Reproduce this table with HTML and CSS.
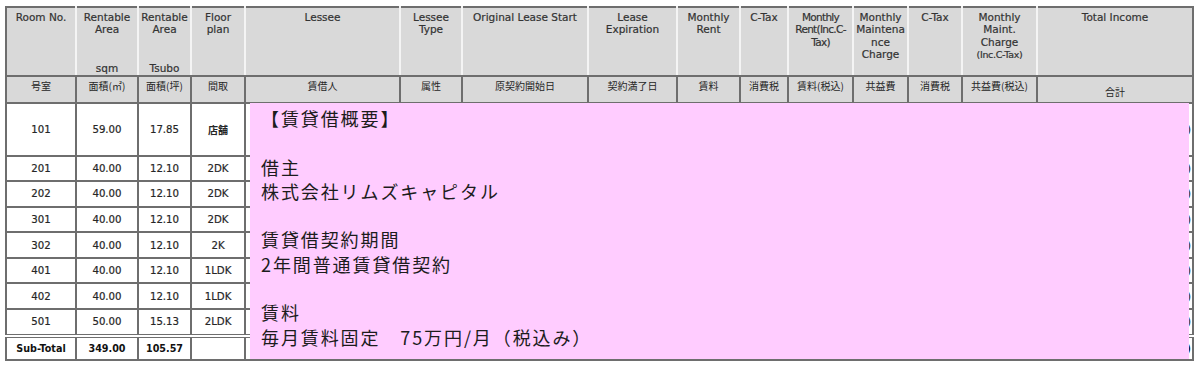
FILE: index.html
```html
<!DOCTYPE html>
<html lang="ja">
<head>
<meta charset="utf-8">
<title>Rent Roll</title>
<link rel="stylesheet" href="styles.css">
</head>
<body>
<div class="sheet">
  <table class="grid">
    <colgroup>
      <col style="width:70px"><col style="width:62px"><col style="width:53px"><col style="width:54px">
      <col style="width:155px"><col style="width:62px"><col style="width:126px"><col style="width:89px">
      <col style="width:63px"><col style="width:48px"><col style="width:65px"><col style="width:55px">
      <col style="width:54px"><col style="width:75px"><col style="width:156px">
    </colgroup>
    <thead>
      <tr class="h1">
        <th>Room No.</th>
        <th><div class="split"><span>Rentable<br>Area</span><span>sqm</span></div></th>
        <th><div class="split"><span>Rentable<br>Area</span><span>Tsubo</span></div></th>
        <th>Floor<br>plan</th>
        <th>Lessee</th>
        <th>Lessee<br>Type</th>
        <th>Original Lease Start</th>
        <th>Lease<br>Expiration</th>
        <th>Monthly<br>Rent</th>
        <th>C-Tax</th>
        <th class="tight">Monthly<br>Rent(Inc.C-<br>Tax)</th>
        <th>Monthly<br>Maintena<br>nce<br>Charge</th>
        <th>C-Tax</th>
        <th>Monthly<br>Maint.<br>Charge<br><span class="small">(Inc.C-Tax)</span></th>
        <th>Total Income</th>
      </tr>
      <tr class="h2">
        <th>号室</th>
        <th>面積(㎡)</th>
        <th>面積(坪)</th>
        <th>間取</th>
        <th>賃借人</th>
        <th>属性</th>
        <th>原契約開始日</th>
        <th>契約満了日</th>
        <th>賃料</th>
        <th>消費税</th>
        <th>賃料(税込)</th>
        <th>共益費</th>
        <th>消費税</th>
        <th>共益費(税込)</th>
        <th class="mid">合計</th>
      </tr>
    </thead>
    <tbody>
      <tr class="tall"><td>101</td><td>59.00</td><td>17.85</td><td class="jp">店舗</td><td></td><td></td><td></td><td></td><td></td><td></td><td></td><td></td><td></td><td></td><td class="amt">(0)</td></tr>
      <tr><td>201</td><td>40.00</td><td>12.10</td><td>2DK</td><td></td><td></td><td></td><td></td><td></td><td></td><td></td><td></td><td></td><td></td><td class="amt">(0)</td></tr>
      <tr><td>202</td><td>40.00</td><td>12.10</td><td>2DK</td><td></td><td></td><td></td><td></td><td></td><td></td><td></td><td></td><td></td><td></td><td class="amt">(0)</td></tr>
      <tr><td>301</td><td>40.00</td><td>12.10</td><td>2DK</td><td></td><td></td><td></td><td></td><td></td><td></td><td></td><td></td><td></td><td></td><td class="amt">(0)</td></tr>
      <tr><td>302</td><td>40.00</td><td>12.10</td><td>2K</td><td></td><td></td><td></td><td></td><td></td><td></td><td></td><td></td><td></td><td></td><td class="amt">(0)</td></tr>
      <tr><td>401</td><td>40.00</td><td>12.10</td><td>1LDK</td><td></td><td></td><td></td><td></td><td></td><td></td><td></td><td></td><td></td><td></td><td class="amt">(0)</td></tr>
      <tr><td>402</td><td>40.00</td><td>12.10</td><td>1LDK</td><td></td><td></td><td></td><td></td><td></td><td></td><td></td><td></td><td></td><td></td><td class="amt">(0)</td></tr>
      <tr><td>501</td><td>50.00</td><td>15.13</td><td>2LDK</td><td></td><td></td><td></td><td></td><td></td><td></td><td></td><td></td><td></td><td></td><td class="amt">(0)</td></tr>
      <tr class="sub"><td>Sub-Total</td><td>349.00</td><td>105.57</td><td></td><td></td><td></td><td></td><td></td><td></td><td></td><td></td><td></td><td></td><td></td><td class="amt">(0)</td></tr>
    </tbody>
  </table>
  <div class="note">
    <p>【賃貸借概要】</p>
    <p>借主<br>株式会社リムズキャピタル</p>
    <p>賃貸借契約期間<br>2年間普通賃貸借契約</p>
    <p>賃料<br>毎月賃料固定　75万円/月（税込み）</p>
  </div>
</div>
</body>
</html>
```

FILE: styles.css
```css
html, body {
  margin: 0;
  padding: 0;
  background: #ffffff;
}

body {
  font-family: "DejaVu Sans", Verdana, sans-serif;
}

.sheet {
  position: relative;
  width: 1187px;
  margin: 6px 0 0 5px;
}

.grid {
  border-collapse: collapse;
  table-layout: fixed;
  width: 1189px;
  color: #262626;
  font-size: 10px;
  -webkit-text-stroke: 0.2px currentColor;
}

.grid th,
.grid td {
  border: 2px solid #6e6e6e;
  padding: 0;
  text-align: center;
  overflow: hidden;
  white-space: nowrap;
}

.grid thead th {
  background: #d9d9d9;
  font-weight: normal;
}

.h1 th {
  height: 64px;
  vertical-align: top;
  padding-top: 3px;
  font-size: 10.5px;
  line-height: 12.3px;
  color: #333333;
  border-left-color: #f4f4f4;
  border-right-color: #f4f4f4;
}

.h1 th:first-child {
  border-left-color: #6e6e6e;
}

.h1 th:last-child {
  border-right-color: #6e6e6e;
}

.split {
  display: flex;
  flex-direction: column;
  justify-content: space-between;
  height: 63px;
}

.tight {
  letter-spacing: -0.7px;
}

.small {
  font-size: 9.5px;
  letter-spacing: -0.3px;
}

.h2 th {
  height: 23px;
  vertical-align: top;
  padding-top: 2px;
  font-family: "Noto Sans CJK JP", sans-serif;
  font-size: 10px;
  font-weight: 700;
  line-height: 14px;
  color: #262626;
  -webkit-text-stroke: 0;
}

.h2 th.mid {
  vertical-align: top;
  padding-top: 8px;
  height: 17px;
}

.grid tbody td {
  height: 23.6px;
  vertical-align: middle;
  font-size: 10.2px;
}

.grid tbody tr.tall td {
  height: 50.5px;
}

.grid td.jp {
  font-family: "Noto Sans CJK JP", sans-serif;
  font-weight: 700;
  font-size: 10px;
  -webkit-text-stroke: 0;
}

.grid td.amt {
  text-align: right;
  padding-right: 1px;
}

.grid tr.sub td {
  border-top: 4px double #6e6e6e;
  font-weight: 700;
  font-size: 9.6px;
  color: #111111;
  height: 21px;
  -webkit-text-stroke: 0;
}

.note {
  position: absolute;
  left: 245px;
  top: 97px;
  width: 939px;
  height: 256px;
  box-sizing: border-box;
  padding: 3px 0 0 11px;
  background: #ffccff;
  font-family: "Noto Sans CJK JP", sans-serif;
  font-size: 18px;
  letter-spacing: 1.9px;
  line-height: 24.3px;
  color: #1c1c1c;
}

.note p {
  margin: 0 0 24.3px 0;
}
```
